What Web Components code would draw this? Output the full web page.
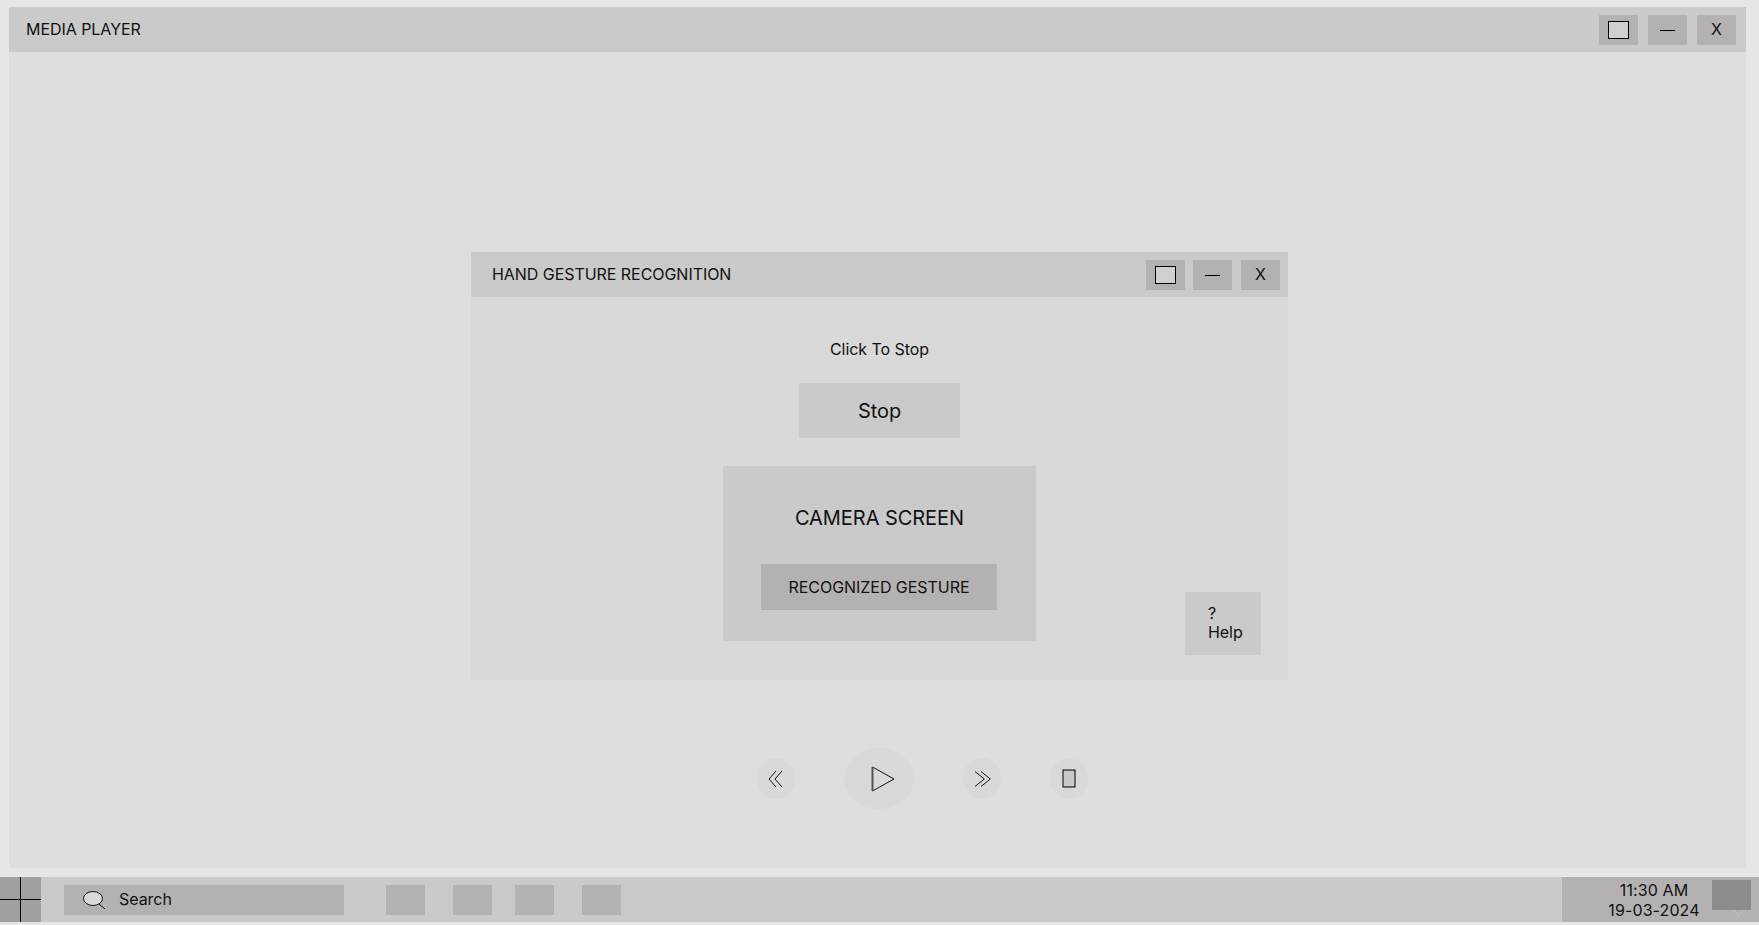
<!DOCTYPE html>
<html lang="en">
<head>
<meta charset="utf-8">
<title>Media Player</title>
<style>
  html, body { height: 100%; }
  body {
    margin: 0;
    padding-top: 7px;
    box-sizing: border-box;
    height: 925px;
    overflow: hidden;
    background: #e6e6e6;
    color: #111;
    font: 16px/19px Inter, "Liberation Sans", sans-serif;
    letter-spacing: -0.05px;
  }
</style>
</head>
<body>
<media-window heading="MEDIA PLAYER">
  <gesture-dialog></gesture-dialog>
  <media-controls></media-controls>
</media-window>
<task-bar></task-bar>

<script>
(function () {
  'use strict';

  // restore, minimise, close; shared by both windows
  class WindowButtons extends HTMLElement {
    constructor() {
      super();
      const gaps = (this.getAttribute('gaps') || '10,10').split(',');
      this.attachShadow({ mode: 'open' }).innerHTML = `
        <style>
          :host { display: flex; }
          .b {
            width: 39px; height: 30px; background: #b3b1b1;
            display: flex; align-items: center; justify-content: center;
          }
          .b + .b { margin-left: var(--gap); }
          .r { width: 19px; height: 16px; background: #d0d0d0; border: 1px solid #000; }
          .m { width: 15px; height: 1px; margin-top: 1px; background: #000; }
        </style>
        <div class="b"><div class="r"></div></div>
        <div class="b" style="--gap:${gaps[0]}px"><div class="m"></div></div>
        <div class="b" style="--gap:${gaps[1]}px">X</div>
      `;
    }
  }

  class MediaWindow extends HTMLElement {
    constructor() {
      super();
      this.attachShadow({ mode: 'open' }).innerHTML = `
        <style>
          :host {
            display: flex; flex-direction: column;
            height: 861px; margin: 0 13px 0 9px; background: #dedede;
          }
          header {
            height: 45px; flex: none; background: #cacaca;
            display: flex; align-items: center; justify-content: space-between;
            padding: 0 10px 0 17px;
          }
          main { flex: 1; display: flex; flex-direction: column; padding-top: 200px; }
        </style>
        <header><span>${this.getAttribute('heading')}</span><window-buttons></window-buttons></header>
        <main><slot></slot></main>
      `;
    }
  }

  class GestureDialog extends HTMLElement {
    constructor() {
      super();
      this.attachShadow({ mode: 'open' }).innerHTML = `
        <style>
          :host {
            display: block; width: 817px; margin-left: 462px; background: #d9d9d9;
          }
          header {
            height: 45px; background: #cacaca;
            display: flex; align-items: center; justify-content: space-between;
            padding: 0 8px 0 21px;
          }
          .body {
            height: 383px;
            display: grid; grid-template-columns: 1fr 313px 1fr;
          }
          .mid { grid-column: 2; display: flex; flex-direction: column; align-items: center; padding-top: 43px; }
          .stop {
            width: 161px; height: 55px; margin-top: 24px; background: #cacaca;
            display: flex; align-items: center; justify-content: center;
            font-size: 20px; line-height: 24px;
          }
          .help {
            grid-column: 3; align-self: end; justify-self: end;
            width: 76px; height: 63px; margin: 0 27px 25px 0; padding: 12px 0 0 23px;
            box-sizing: border-box; background: #cacaca;
          }
        </style>
        <header><span>HAND GESTURE RECOGNITION</span><window-buttons gaps="8,9"></window-buttons></header>
        <div class="body">
          <div class="mid">
            <div>Click To Stop</div>
            <div class="stop">Stop</div>
            <camera-screen></camera-screen>
          </div>
          <div class="help">?<br>Help</div>
        </div>
      `;
    }
  }

  class CameraScreen extends HTMLElement {
    constructor() {
      super();
      this.attachShadow({ mode: 'open' }).innerHTML = `
        <style>
          :host {
            display: flex; flex-direction: column; align-items: center; box-sizing: border-box;
            width: 313px; height: 175px; margin-top: 28px; padding-top: 40px; background: #cacaca;
          }
          .t { font-size: 20px; line-height: 24px; }
          .g {
            width: 236px; height: 46px; margin: 34px 1px 0 0; background: #b3b1b1;
            display: flex; align-items: center; justify-content: center;
          }
        </style>
        <div class="t">CAMERA SCREEN</div>
        <div class="g">RECOGNIZED GESTURE</div>
      `;
    }
  }

  class MediaControls extends HTMLElement {
    constructor() {
      super();
      this.attachShadow({ mode: 'open' }).innerHTML = `
        <style>
          :host { display: flex; align-items: center; gap: 49px; margin: 68px 0 0 748px; }
          .c {
            width: 38px; height: 41px; border-radius: 50%; background: #d9d9d9;
            display: flex; align-items: center; justify-content: center;
          }
          .p { width: 70px; height: 61px; }
          .p svg { margin-left: 7px; }
          svg { display: block; fill: none; stroke: #111; stroke-width: 1; }
        </style>
        <div class="c"><svg width="16" height="18" viewBox="0 0 16 18">
          <path d="M8 1 1 9l7 8M14 1 7 9l7 8"/></svg></div>
        <div class="c p"><svg width="24" height="26" viewBox="0 0 24 26">
          <path d="M1.5 1 23 13 1.5 25Z"/><path d="M1.5 1V25" stroke="#555" stroke-width="2"/></svg></div>
        <div class="c"><svg width="17" height="16" viewBox="0 0 17 16">
          <path d="M1 .5 10.3 8 1 15.500M7 .5 16.300 8 7 15.500"/></svg></div>
        <div class="c"><svg width="14" height="19" viewBox="0 0 14 19">
          <rect x="1" y="1" width="12" height="17" fill="#c9c9c9" stroke="#000"/></svg></div>
      `;
    }
  }

  class TaskBar extends HTMLElement {
    constructor() {
      super();
      this.attachShadow({ mode: 'open' }).innerHTML = `
        <style>
          :host {
            display: flex; align-items: center; height: 45px; margin-top: 9px;
            background: #cacaca;
          }
          .start { width: 41px; height: 45px; flex: none; }
          .start svg { display: block; }
          .search {
            width: 280px; height: 30px; margin: 0 42px 0 23px; padding-left: 19px; gap: 13px;
            box-sizing: border-box; background: #b3b1b1;
            display: flex; align-items: center;
          }
          .tile { width: 39px; height: 30px; background: #b3b1b1; flex: none; }
          .clock {
            position: relative;
            width: 197px; height: 45px; margin-left: auto; padding-right: 13px; box-sizing: border-box;
            background: #b3b1b1;
            display: flex; flex-direction: column; justify-content: center; text-align: center;
            line-height: 20px; letter-spacing: 0.1px;
          }
          /* tray square sits over the clock panel, with its chevron peeking out below */
          .tray { position: absolute; left: 150px; top: 3px; width: 39px; height: 30px; background: #8f8c8c; }
          .chev { position: absolute; left: 170px; top: 33px; }
        </style>
        <div class="start"><svg width="41" height="45" viewBox="0 0 41 45">
          <rect width="41" height="45" fill="#a0a0a0"/>
          <path d="M20.5 0V45M0 22.5H41" stroke="#000" fill="none"/></svg></div>
        <div class="search">
          <svg width="23" height="18" viewBox="0 0 23 18" style="flex:none">
            <ellipse cx="10" cy="7.5" rx="9.500" ry="7" fill="#d9d9d9" stroke="#111"/>
            <path d="M16 13l6 5" stroke="#111" fill="none"/></svg>
          <span>Search</span>
        </div>
        <div class="tile"></div>
        <div class="tile" style="margin-left:28px"></div>
        <div class="tile" style="margin-left:23px"></div>
        <div class="tile" style="margin-left:28px"></div>
        <div class="clock">
          <div>11:30 AM</div>
          <div>19-03-2024</div>
          <div class="tray"></div>
          <svg class="chev" width="14" height="6" viewBox="0 0 14 6"><path d="M1 0l6 5 6-5" fill="none" stroke="#c4c2c2"/></svg>
        </div>
      `;
    }
  }

  customElements.define('window-buttons', WindowButtons);
  customElements.define('media-window', MediaWindow);
  customElements.define('gesture-dialog', GestureDialog);
  customElements.define('camera-screen', CameraScreen);
  customElements.define('media-controls', MediaControls);
  customElements.define('task-bar', TaskBar);
})();
</script>
</body>
</html>
